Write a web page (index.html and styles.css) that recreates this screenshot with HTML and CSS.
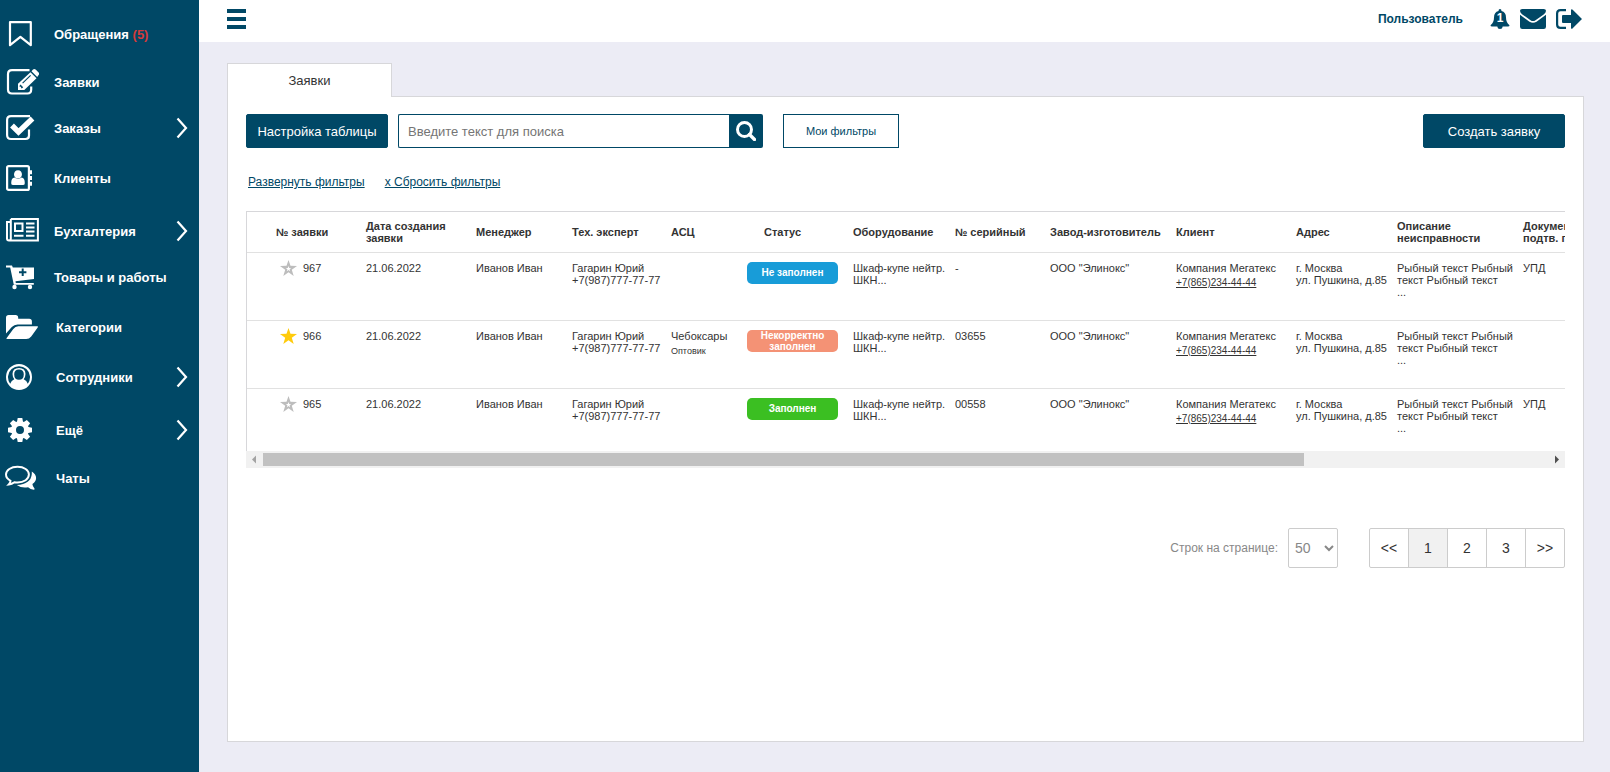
FILE: index.html
```html
<!DOCTYPE html>
<html lang="ru">
<head>
<meta charset="utf-8">
<meta name="viewport" content="width=device-width, initial-scale=1">
<title>Заявки</title>
<link rel="stylesheet" href="styles.css">
</head>
<body>
<div class="app">
  <nav class="sidebar" aria-label="Главное меню">
    <ul class="nav">
      <li class="nav-item"><a class="nav-link" href="#">
        <svg class="nav-icon" width="34" height="28" viewBox="0 0 34 28"><path d="M5 2.200h20.800v23l-10.400-8.400L5 25.200z" fill="none" stroke="currentColor" stroke-width="2.200" stroke-linejoin="round"/></svg>
        <span>Обращения <span class="nav-count">(5)</span></span></a></li>
      <li class="nav-item"><a class="nav-link" href="#">
        <svg class="nav-icon" width="34" height="28" viewBox="0 0 34 28"><path d="M24.500 2.200H7Q3 2.200 3 6.200V21.500Q3 25.500 7 25.500H22.500Q26.200 25.500 26.200 21.500v-3" fill="none" stroke="currentColor" stroke-width="2.200"/><path fill="currentColor" fill-rule="evenodd" d="M25.500 4.200l6 6L19.300 22h-6.300v-6.300zM15.500 16.600l-.9 1.100v1.100h1.500v1.500h1l1.100-1.100zM25.200 6.900l-8 7.900.8.800 8-7.900z"/><path fill="currentColor" d="M26.500 3.200l1.500-1.700q1.300-1.200 2.600 0l3 3q1.200 1.300 0 2.600L32.200 8.900z"/></svg>
        <span>Заявки</span></a></li>
      <li class="nav-item nav-item--tight"><a class="nav-link" href="#">
        <svg class="nav-icon" width="34" height="28" viewBox="0 0 34 28"><path d="M25 2.200H6Q2.100 2.200 2.100 6V21Q2.100 25 6 25H20.500Q24 25 24 21.500v-6" fill="none" stroke="currentColor" stroke-width="2.200"/><path d="M7 11.500l6.500 6.500L27.500 4.500" fill="none" stroke="currentColor" stroke-width="5.400"/></svg>
        <span>Заказы</span>
        <svg class="chevron" width="12" height="22" viewBox="0 0 12 22"><path d="M1.500 1.500l8.500 9.500-8.500 9.500" fill="none" stroke="currentColor" stroke-width="2.200"/></svg></a></li>
      <li class="nav-item nav-item--loose"><a class="nav-link" href="#">
        <svg class="nav-icon" width="34" height="28" viewBox="0 0 34 28"><rect x="2.100" y="2.100" width="21.800" height="23.800" rx="1.500" fill="none" stroke="currentColor" stroke-width="2.200"/><path fill="currentColor" d="M25 6.300h2v4h-2zM25 12h2v4h-2zM25 17.700h2v4h-2zM13 6.200c5.400 0 5.200 8.300 0 8.300s-5.400-8.300 0-8.300zM9.600 13.600q3.400 2.800 6.900 0 3.300.3 3.300 5.600 0 1.900-2 1.900H8.200q-2 0-2-1.900 0-5.300 3.400-5.600z"/></svg>
        <span>Клиенты</span></a></li>
      <li class="nav-item nav-item--section"><a class="nav-link" href="#">
        <svg class="nav-icon" width="34" height="28" viewBox="0 0 34 28"><path d="M5.800 2h27.100v21.500H4Q2 23.500 2 21.500V5h3.800M5.800 2v19.500Q5.800 23.500 4 23.500" fill="none" stroke="currentColor" stroke-width="2"/><rect x="10" y="6.500" width="7.500" height="7.500" fill="none" stroke="currentColor" stroke-width="2"/><path d="M21 6.500h8.500M21 10.500h8.500M21 14.500h8.500M9 18.800h9.500M21 18.800h8.500" stroke="currentColor" stroke-width="2"/></svg>
        <span>Бухгалтерия</span>
        <svg class="chevron" width="12" height="22" viewBox="0 0 12 22"><path d="M1.500 1.500l8.500 9.500-8.500 9.500" fill="none" stroke="currentColor" stroke-width="2.200"/></svg></a></li>
      <li class="nav-item nav-item--tight"><a class="nav-link" href="#">
        <svg class="nav-icon" width="34" height="28" viewBox="0 0 34 28"><path fill="currentColor" fill-rule="evenodd" d="M1 2.500h6l.8 2H29v11.500L10.500 18.200l.3 1.800h18v1.700H8.800L5.200 4.500H1zm15.700 3v2.700H14v2h2.700V13h2v-2.800h2.700v-2h-2.700V5.500z"/><circle cx="9.500" cy="24" r="2.200" fill="currentColor"/><circle cx="25" cy="24" r="2.200" fill="currentColor"/></svg>
        <span>Товары и работы</span></a></li>
      <li class="nav-item nav-item--loose"><a class="nav-link nav-link--inset" href="#">
        <svg class="nav-icon" width="34" height="28" viewBox="0 0 34 28"><path fill="currentColor" d="M1 20.500V4.700Q1 2 3.700 2h6.800q2.700 0 2.700 2.700v1h11q2.700 0 2.700 2.700v3H12.500q-3.300 0-5.700 2.600zM1.500 25.200L8.300 16q2-2.700 5-2.700h19q1.200 0 .4 1.200l-6.500 9q-2 2.500-5 2.500H2.300q-1.500 0-.8-.8z"/></svg>
        <span>Категории</span></a></li>
      <li class="nav-item nav-item--loose"><a class="nav-link nav-link--inset" href="#">
        <svg class="nav-icon" width="34" height="28" viewBox="0 0 34 28"><path fill="currentColor" fill-rule="evenodd" d="M14 1a13 13 0 1 1 0 26 13 13 0 0 1 0-26zM5.200 20.800A11 11 0 1 1 22.800 20.800Q21.700 17.200 18.700 16.200 20.500 14 20.500 11 20.500 5 14 5T7.500 11q0 3 1.800 5.200-3 1-4.100 4.600zM14 6.500q-4.800 0-4.800 4.700 0 5.600 4.800 5.600t4.800-5.600q0-4.700-4.800-4.700z"/></svg>
        <span>Сотрудники</span>
        <svg class="chevron" width="12" height="22" viewBox="0 0 12 22"><path d="M1.500 1.500l8.500 9.500-8.500 9.500" fill="none" stroke="currentColor" stroke-width="2.200"/></svg></a></li>
      <li class="nav-item nav-item--section"><a class="nav-link nav-link--inset" href="#">
        <svg class="nav-icon" width="34" height="28" viewBox="0 0 34 28"><g fill="currentColor" transform="translate(15 14)"><g id="teeth"><path d="M-2.300-12h4.600l.9 5h-6.400zM-2.300 12h4.600l.9-5h-6.400zM-12-2.300v4.600l5 .9v-6.400zM12-2.300v4.600l-5 .9v-6.400z"/></g><use href="#teeth" transform="rotate(45)"/></g><circle cx="15" cy="14" r="6.500" fill="none" stroke="currentColor" stroke-width="5"/></svg>
        <span>Ещё</span>
        <svg class="chevron" width="12" height="22" viewBox="0 0 12 22"><path d="M1.500 1.500l8.500 9.500-8.500 9.500" fill="none" stroke="currentColor" stroke-width="2.200"/></svg></a></li>
      <li class="nav-item"><a class="nav-link nav-link--inset" href="#">
        <svg class="nav-icon" width="34" height="28" viewBox="0 0 34 28"><path d="M12.500 2.700c6.500 0 11.400 3.500 11.400 7.900s-4.900 7.900-11.400 7.900q-1.600 0-3.100-.3-2.500 1.900-5.600 2.200 1.700-1.700 1.700-3.600Q1 14.300 1 10.600c0-4.400 5-7.900 11.500-7.900z" fill="none" stroke="currentColor" stroke-width="2"/><path fill="currentColor" d="M26.800 7.500q4.300 2.600 4.300 6.500 0 3.600-3.700 6 .2 2.600 2.200 4.800.2.900-.9.900-3.300-.5-5.600-2.500-6.500 1.200-11.300-2.200Q26 20.200 26.800 10z"/></svg>
        <span>Чаты</span></a></li>
    </ul>
  </nav>

  <div class="page">
    <header class="topbar">
      <button class="icon-button" type="button" aria-label="Меню"><svg width="19" height="20" viewBox="0 0 19 20"><path fill="currentColor" d="M0 0h19v4H0zM0 8h19v4H0zM0 16h19v4H0z"/></svg></button>
      <div class="account">
        <a class="user" href="#">Пользователь</a>
        <button class="icon-button bell" type="button" aria-label="Уведомления"><svg width="20" height="20" viewBox="0 0 20 20"><path fill="currentColor" d="M8.500 2q0-2 1.500-2t1.500 2Q16 3 16 8.500q0 5 3.500 7.700 0 1.300-1.500 1.300h-5.300Q12.500 20 10 20t-2.700-2.500H2q-1.500 0-1.500-1.300Q4 13.500 4 8.500 4 3 8.500 2z"/></svg><span class="bell-count">1</span></button>
        <button class="icon-button" type="button" aria-label="Сообщения"><svg width="26" height="20" viewBox="0 0 26 20"><path fill="currentColor" d="M2.300 0h21.400Q26 0 26 1.800T24 5.200l-8.500 6Q13 13 10.500 11.200L2 5.200Q0 3.500 0 1.800T2.300 0zM0 5.800l9.500 6.900q3.500 2.300 7 0L26 5.800v11.900Q26 20 23.700 20H2.300Q0 20 0 17.700z"/></svg></button>
        <button class="icon-button" type="button" aria-label="Выйти"><svg width="26" height="20" viewBox="0 0 26 20"><path d="M10 1.100H4.500Q1.100 1.100 1.100 4.500v11q0 3.400 3.400 3.400H10" fill="none" stroke="currentColor" stroke-width="2.200"/><path fill="currentColor" d="M7 6h8V.8q.8-1 1.700 0L26 10l-9.300 9.200q-.9 1-1.700 0V14H7Q6 14 6 13V7q0-1 1-1z"/></svg></button>
      </div>
    </header>

    <main class="content">
      <div class="tabs"><a class="tab" href="#" aria-current="page">Заявки</a></div>
      <section class="panel">
        <div class="toolbar">
          <button class="button button--primary" type="button">Настройка таблицы</button>
          <form class="search">
            <input class="search-input" type="text" placeholder="Введите текст для поиска" aria-label="Поиск">
            <button class="search-button" type="button" aria-label="Найти"><svg width="20" height="20" viewBox="0 0 20 20" fill="none" stroke="currentColor"><circle cx="8.500" cy="8.500" r="7" stroke-width="3"/><path d="M13.500 13.500l5 5" stroke-width="3.400" stroke-linecap="round"/></svg></button>
          </form>
          <button class="button button--outline" type="button">Мои фильтры</button>
          <button class="button button--primary button--end" type="button">Создать заявку</button>
        </div>
        <div class="filters">
          <a class="filter-link" href="#">Развернуть фильтры</a>
          <a class="filter-link" href="#">x Сбросить фильтры</a>
        </div>

        <div class="table-box">
          <table class="orders">
            <colgroup><col class="c-number"><col class="c-date"><col class="c-manager"><col class="c-expert"><col class="c-center"><col class="c-status"><col class="c-equipment"><col class="c-serial"><col class="c-maker"><col class="c-client"><col class="c-address"><col class="c-fault"><col class="c-docs"></colgroup>
            <thead>
              <tr><th class="head-number">№ заявки</th><th>Дата создания<br>заявки</th><th>Менеджер</th><th>Тех. эксперт</th><th>АСЦ</th><th class="head-status">Статус</th><th>Оборудование</th><th>№ серийный</th><th>Завод-изготовитель</th><th>Клиент</th><th>Адрес</th><th>Описание<br>неисправности</th><th>Документы,<br>подтв. гарантию</th></tr>
            </thead>
            <tbody>
              <tr>
                <td><div class="number"><svg class="star" width="17" height="16" viewBox="0 0 17 16"><path fill="currentColor" fill-rule="evenodd" d="M8.500 0l2 5.700 6.500.2-5.200 3.800 1.900 6.300-5.200-3.700L3.300 16l1.900-6.300L0 5.900l6.500-.2zm0 6l-.7 2-2 .1 1.600 1.200-.6 2 1.700-1.200 1.700 1.200-.6-2 1.600-1.200-2-.1z"/></svg>967</div></td>
                <td>21.06.2022</td><td>Иванов Иван</td><td>Гагарин Юрий<br>+7(987)777-77-77</td><td></td>
                <td><span class="badge badge--empty">Не заполнен</span></td>
                <td>Шкаф-купе нейтр.<br>ШКН...</td><td>-</td><td>ООО "Элинокс"</td>
                <td>Компания Мегатекс<a class="phone" href="#">+7(865)234-44-44</a></td>
                <td>г. Москва<br>ул. Пушкина, д.85</td><td>Рыбный текст Рыбный<br>текст Рыбный текст<br>...</td><td>УПД</td>
              </tr>
              <tr>
                <td><div class="number"><svg class="star star--on" width="17" height="16" viewBox="0 0 17 16"><path fill="currentColor" d="M8.500 0l2 5.700 6.500.2-5.200 3.800 1.900 6.300-5.200-3.700L3.300 16l1.900-6.300L0 5.900l6.500-.2z"/></svg>966</div></td>
                <td>21.06.2022</td><td>Иванов Иван</td><td>Гагарин Юрий<br>+7(987)777-77-77</td><td>Чебоксары<span class="note">Оптовик</span></td>
                <td><span class="badge badge--wrong">Некорректно<br>заполнен</span></td>
                <td>Шкаф-купе нейтр.<br>ШКН...</td><td>03655</td><td>ООО "Элинокс"</td>
                <td>Компания Мегатекс<a class="phone" href="#">+7(865)234-44-44</a></td>
                <td>г. Москва<br>ул. Пушкина, д.85</td><td>Рыбный текст Рыбный<br>текст Рыбный текст<br>...</td><td></td>
              </tr>
              <tr>
                <td><div class="number"><svg class="star" width="17" height="16" viewBox="0 0 17 16"><path fill="currentColor" fill-rule="evenodd" d="M8.500 0l2 5.700 6.500.2-5.200 3.800 1.900 6.300-5.200-3.700L3.300 16l1.900-6.300L0 5.900l6.500-.2zm0 6l-.7 2-2 .1 1.600 1.200-.6 2 1.700-1.200 1.700 1.200-.6-2 1.600-1.200-2-.1z"/></svg>965</div></td>
                <td>21.06.2022</td><td>Иванов Иван</td><td>Гагарин Юрий<br>+7(987)777-77-77</td><td></td>
                <td><span class="badge badge--done">Заполнен</span></td>
                <td>Шкаф-купе нейтр.<br>ШКН...</td><td>00558</td><td>ООО "Элинокс"</td>
                <td>Компания Мегатекс<a class="phone" href="#">+7(865)234-44-44</a></td>
                <td>г. Москва<br>ул. Пушкина, д.85</td><td>Рыбный текст Рыбный<br>текст Рыбный текст<br>...</td><td>УПД</td>
              </tr>
            </tbody>
          </table>
        </div>
        <div class="scrollbar" aria-hidden="true">
          <svg class="scroll-arrow scroll-arrow--off" width="17" height="17" viewBox="0 0 17 17"><path fill="currentColor" d="M10 4.500v8L6 8.500z"/></svg>
          <div class="scroll-track"><div class="scroll-thumb"></div></div>
          <svg class="scroll-arrow" width="17" height="17" viewBox="0 0 17 17"><path fill="currentColor" d="M7 4.500v8l4-4z"/></svg>
        </div>

        <div class="pager">
          <label class="pager-label" for="rows">Строк на странице:</label>
          <select class="pager-select" id="rows"><option>50</option></select>
          <nav class="pages" aria-label="Страницы">
            <a class="page-link" href="#">&lt;&lt;</a><a class="page-link page-link--current" href="#" aria-current="page">1</a><a class="page-link" href="#">2</a><a class="page-link" href="#">3</a><a class="page-link" href="#">&gt;&gt;</a>
          </nav>
        </div>
      </section>
    </main>
  </div>
</div>
</body>
</html>
```
FILE: styles.css
```css
:root {
  --brand: #004866;
  --line: #d7d7da;
  --text: #333;
}

* { box-sizing: border-box; }

body {
  margin: 0;
  font-family: "Liberation Sans", Arial, sans-serif;
  font-size: 13px;
  color: var(--text);
  background: #ececf5;
}

button, input, select { font: inherit; }

.app { display: flex; min-height: 100vh; }

.sidebar { flex: none; width: 199px; background: var(--brand); color: #fff; }
.nav { list-style: none; margin: 0; padding: 14px 0 0; }
.nav-item { padding-top: 8px; }
.nav-item:first-child { padding-top: 0; }
.nav-item--tight { padding-top: 6px; }
.nav-item--loose { padding-top: 10px; }
.nav-item--section { padding-top: 13px; }
.nav-link {
  display: flex;
  align-items: center;
  gap: 15px;
  height: 40px;
  padding: 0 11px 0 5px;
  color: inherit;
  font-weight: bold;
  text-decoration: none;
}
.nav-link--inset { gap: 17px; }
.nav-icon { flex: none; }
.nav-count { color: #d43a3a; }
.chevron { margin-left: auto; }

.page { flex: 1; min-width: 0; display: flex; flex-direction: column; }

.topbar {
  display: flex;
  align-items: flex-start;
  justify-content: space-between;
  height: 42px;
  padding: 9px 28px 0;
  background: #fff;
  color: var(--brand);
}
.icon-button { display: flex; padding: 0; border: 0; background: none; color: inherit; }
.account { display: flex; align-items: center; gap: 10px; }
.user { margin-right: 17px; color: inherit; font-size: 12px; font-weight: bold; text-decoration: none; }
.bell { position: relative; }
.bell-count {
  position: absolute;
  inset: 2px 0 0;
  color: #fff;
  font-size: 12px;
  font-weight: bold;
  line-height: 14px;
  text-align: center;
}

.content { flex: 1; display: flex; flex-direction: column; padding: 21px 26px 30px 28px; }
.tabs { display: flex; }
.tab {
  z-index: 1;
  width: 165px;
  height: 34px;
  margin-bottom: -1px;
  border: 1px solid var(--line);
  border-bottom: 0;
  background: #fff;
  color: var(--text);
  line-height: 34px;
  text-align: center;
  text-decoration: none;
}
.panel { flex: 1; min-width: 0; padding: 17px 18px; border: 1px solid var(--line); background: #fff; }

.toolbar { display: flex; }
.button { height: 34px; padding: 0; border: 1px solid var(--brand); }
.button--primary { width: 142px; border-radius: 2px; background: var(--brand); color: #fff; }
.button--outline { width: 116px; background: #fff; color: var(--brand); font-size: 11px; }
.button--end { margin-left: auto; }
.search { display: flex; width: 365px; margin: 0 20px 0 10px; }
.search-input {
  flex: 1;
  min-width: 0;
  padding: 0 9px;
  border: 1px solid var(--brand);
  border-right: 0;
  border-radius: 2px 0 0 2px;
}
.search-input::placeholder { color: #757575; }
.search-button {
  display: flex;
  align-items: center;
  justify-content: center;
  width: 34px;
  height: 34px;
  padding: 0;
  border: 0;
  border-radius: 0 2px 2px 0;
  background: var(--brand);
  color: #fff;
}

.filters { display: flex; gap: 20px; padding: 26px 2px 21px; font-size: 12px; line-height: 16px; }
.filter-link { color: var(--brand); }

.table-box { overflow: hidden; border: 1px solid var(--line); border-width: 1px 0 0 1px; }
.orders { width: 1630px; table-layout: fixed; border-collapse: collapse; font-size: 11px; line-height: 12px; }
.orders th, .orders td { padding: 0 0 0 5px; text-align: left; white-space: nowrap; }
.orders th { height: 40px; }
.orders td { height: 68px; padding-top: 9px; vertical-align: top; }
.orders tbody tr:last-child td { height: 63px; }
.orders tbody tr { border-top: 1px solid #e1e1e1; }
.orders .head-number { padding-left: 29px; }
.orders .head-status { padding-left: 22px; }
.c-number { width: 114px; }
.c-date { width: 110px; }
.c-manager { width: 96px; }
.c-expert { width: 99px; }
.c-center { width: 76px; }
.c-status { width: 106px; }
.c-equipment { width: 102px; }
.c-serial { width: 95px; }
.c-maker { width: 126px; }
.c-client { width: 120px; }
.c-address { width: 101px; }
.c-fault { width: 126px; }

.number { display: flex; gap: 6px; height: 16px; padding-left: 28px; }
.star { color: #bdbdbd; margin-top: -2px; }
.star--on { color: #ffcb0c; }
.badge {
  display: flex;
  align-items: center;
  justify-content: center;
  width: 91px;
  height: 22px;
  border-radius: 5px;
  color: #fff;
  font-size: 10px;
  font-weight: bold;
  line-height: 11px;
  text-align: center;
}
.badge--empty { background: #189cd8; }
.badge--wrong { background: #f49275; }
.badge--done { background: #3bbf22; }
.note { display: block; margin-top: 3px; font-size: 9px; }
.phone { display: block; margin-top: 3px; color: inherit; font-size: 10px; }

.scrollbar { display: flex; height: 17px; background: #f1f1f1; }
.scroll-arrow { flex: none; color: #505050; }
.scroll-arrow--off { color: #a3a3a3; }
.scroll-track { flex: 1; padding: 2px 0; }
.scroll-thumb { width: 81%; height: 13px; background: #c1c1c1; }

.pager { display: flex; align-items: center; justify-content: flex-end; margin-top: 60px; }
.pager-label { margin-right: 10px; color: #888; font-size: 12px; }
.pager-select {
  width: 50px;
  height: 40px;
  margin-right: 31px;
  padding: 0 2px;
  border: 1px solid #ccc;
  border-radius: 2px;
  background: #fff;
  color: #888;
  font-size: 14px;
}
.pages { display: flex; border: 1px solid #ccc; border-radius: 2px; }
.page-link {
  width: 39px;
  height: 38px;
  border-left: 1px solid #ccc;
  color: var(--text);
  font-size: 14px;
  line-height: 38px;
  text-align: center;
  text-decoration: none;
}
.page-link:first-child { width: 38px; border-left: 0; }
.page-link--current { background: #f1f1f1; }
```
